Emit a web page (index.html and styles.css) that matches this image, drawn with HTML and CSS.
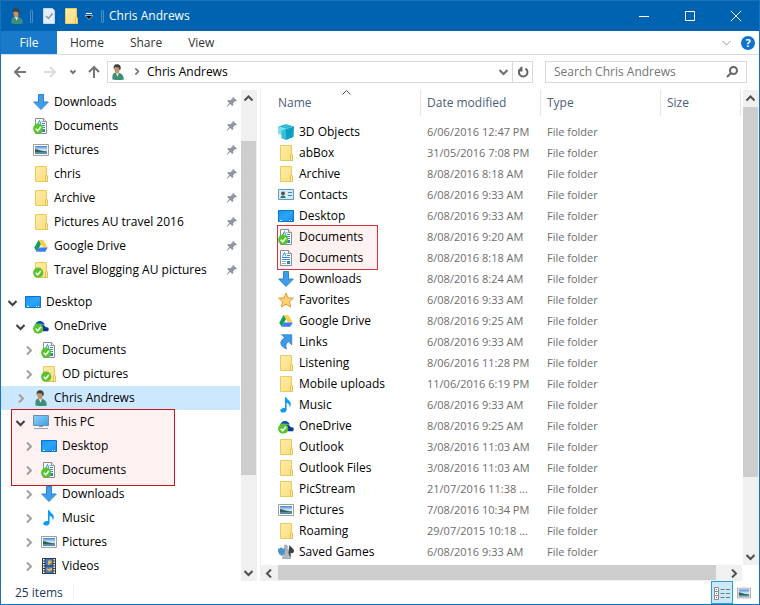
FILE: index.html
```
<!DOCTYPE html>
<html lang="en">
  <head>
    <meta charset="utf-8" />
    <title>Chris Andrews</title>
    <meta name="viewport" content="width=device-width, initial-scale=1.0" />
    <link rel="stylesheet" href="styles.css">
  </head>
  <body>
    <!-- Icon sprite -->
    <svg class="sprite" aria-hidden="true">
      <defs>
        <linearGradient id="folder-fill" x1="0" y1="0" x2="1" y2="1">
          <stop offset="0" stop-color="#ffedaa" />
          <stop offset="1" stop-color="#fbdc7c" />
        </linearGradient>
        <linearGradient id="sky" x1="0" y1="0" x2="0" y2="1">
          <stop offset="0" stop-color="#3f86d8" />
          <stop offset=".5" stop-color="#d5ebfa" />
          <stop offset="1" stop-color="#7fb3dc" />
        </linearGradient>
        <linearGradient id="screen" x1="0" y1="0" x2="1" y2="1">
          <stop offset="0" stop-color="#1a94ee" />
          <stop offset=".5" stop-color="#2aa5f8" />
          <stop offset="1" stop-color="#148fea" />
        </linearGradient>
        <linearGradient id="pc-screen" x1="0" y1="0" x2="1" y2="1">
          <stop offset="0" stop-color="#8fd0fa" />
          <stop offset="1" stop-color="#3d9fe6" />
        </linearGradient>
      </defs>
      <symbol id="badge" viewBox="0 0 16 16">
        <circle cx="5.2" cy="10.7" r="5.1" fill="#56c52c" />
        <path d="M2.7 10.8l2 2 3.3-4" fill="none" stroke="#fff" stroke-width="1.5" />
      </symbol>
      <symbol id="folder" viewBox="0 0 16 16">
        <path d="M2.5.5h11v9l1 1v5h-12z" fill="url(#folder-fill)" stroke="#ecc95f" />
        <path d="M12.5 15.5V10l1-1 1 1v5.5z" fill="#fff0b4" stroke="#e6bf4c" />
      </symbol>
      <symbol id="folder-sync" viewBox="0 0 16 16">
        <use href="#folder" /><use href="#badge" />
      </symbol>
      <symbol id="document" viewBox="0 0 16 16">
        <path d="M2.5.5h8l3 3v12h-11z" fill="#fdfdfd" stroke="#8d8d8d" />
        <path d="M10.5.5v3h3" fill="#eee" stroke="#8d8d8d" />
        <path d="M4.500 6.500l2-4 1.500 4M8.500 3.500h1M9 5.500h3M4 7.500h8M4 9.500h8" fill="none" stroke="#3a8cd4" />
        <path d="M4 11.500h4M4 13.500h4" stroke="#9aa7b2" />
        <path d="M9 11h3v3H9z" fill="#2f7fc4" />
      </symbol>
      <symbol id="document-sync" viewBox="0 0 16 16">
        <use href="#document" /><use href="#badge" />
      </symbol>
      <symbol id="picture" viewBox="0 0 16 16">
        <path d="M.5 2.5h15v11H.5z" fill="#fff" stroke="#a0a0a0" />
        <path d="M2 4h12v8H2z" fill="url(#sky)" />
        <path d="M2 7c3 .4 5 2 12 2.6v.9H2z" fill="#2f5f55" />
        <path d="M2 10.5h12V12H2z" fill="#5288a8" />
      </symbol>
      <symbol id="download" viewBox="0 0 16 16">
        <path d="M5.5.5h5V8h4.800L8 15.500.7 8h4.800z" fill="#3f9eec" stroke="#2f83cd" />
      </symbol>
      <symbol id="gdrive" viewBox="0 0 16 16">
        <path d="M5.600 2h4.800l4.300 7.600H9.900z" fill="#ffcf48" />
        <path d="M5.600 2L1.200 9.700l2.400 4.100L8 6.200z" fill="#11a15f" />
        <path d="M3.600 13.800L6 9.600h8.700l-2.400 4.200z" fill="#3f7df0" />
      </symbol>
      <symbol id="desktop" viewBox="0 0 16 16">
        <path d="M.5 2.5h15v11H.5z" fill="url(#screen)" stroke="#0b74c4" />
        <path d="M2 12.500h2M11 12.500h1M13 12.500h1" stroke="#d8efff" />
      </symbol>
      <symbol id="onedrive" viewBox="0 0 16 16">
        <path d="M2 9.500C1.600 5.500 4 3 7 3c2.400 0 4 1.300 4.600 3.400L9 8z" fill="#0b4fae" />
        <path d="M4 13.500c-1-4 1.200-7 4.300-7.200 2.200 0 3.600 1 4.200 2.500 2.200-.2 3.500 1 3.500 2.400 0 1.400-1 2.300-2.200 2.300z" fill="#07389a" stroke="#fff" stroke-width=".5" />
        <use href="#badge" />
      </symbol>
      <symbol id="user" viewBox="0 0 16 16">
        <path d="M2.500 15.500c-.5-4 .3-6.500 2.800-7l3.700.2c3 .7 5 3.200 4.800 6.800-2 .8-8 .8-11.300 0z" fill="#3f8f74" />
        <path d="M5.500 8.500H9l-1.300 4.300z" fill="#e9f3f5" />
        <path d="M4.300 3.500h5.200c.4 3-.5 6-2.200 6S4 6.500 4.300 3.500z" fill="#c98f63" />
        <path d="M3.900 5C3 2 4.500.3 7 .3s4.500 1.500 3.500 5.200L9.300 6 9 3.800 5 3.300z" fill="#41403f" />
      </symbol>
      <symbol id="pc" viewBox="0 0 16 16">
        <path d="M.5 1.5h15v10H.5z" fill="url(#pc-screen)" stroke="#6d8ea8" />
        <path d="M6 12.500h4" stroke="#8b9aa6" />
        <path d="M1 14.500h14" stroke="#9aa5ae" />
      </symbol>
      <symbol id="music" viewBox="0 0 16 16">
        <path d="M7 .3h1.500c.3 2.800 4.800 3.500 4.300 7.500-.2 1.300-.7 2-1.200 2.700.5-3-1.300-4.300-3-4.800v7c0 1.700-1.600 2.900-3.500 2.900-1.600 0-2.800-.8-2.800-2.100 0-1.700 2.300-3 4.700-2.500z" fill="#0d9cf5" />
      </symbol>
      <symbol id="video" viewBox="0 0 16 16">
        <path d="M1 0h14v16H1z" fill="#3a3a3a" />
        <path d="M4.500 1h7v6.500h-7zM4.500 8.500h7V15h-7z" fill="#3b78d8" />
        <path d="M7 2.500h3.500v3h-2V7H7zM5 10l3 1 3-1.500V12l-2 1H7z" fill="#e8bd2c" />
        <path d="M2.750 1v14M13.250 1v14" stroke="#fff" stroke-width="1.5" stroke-dasharray="1.5 1" />
      </symbol>
      <symbol id="cube" viewBox="0 0 16 16">
        <path d="M0 2.500L8 0l8 2.500L8 5z" fill="#36b9d0" />
        <path d="M0 2.500L8 5v11l-4.500-2v-3L0 10z" fill="#7fe0ee" />
        <path d="M3.500 6.500L8 5v11l-4.500-2z" fill="#35c0da" />
        <path d="M16 2.500L8 5v11l7.500-3z" fill="#0d9fc4" />
      </symbol>
      <symbol id="contacts" viewBox="0 0 16 16">
        <path d="M.5 2.5h15v10H.5z" fill="#d3ebf9" stroke="#5b9cc4" />
        <path d="M2.500 11c0-2 1-2.600 2.500-2.600S7.500 9 7.500 11z" fill="#2f7d63" />
        <circle cx="5" cy="6.3" r="1.9" fill="#5a4a40" />
        <path d="M10 5.500h4M10 8.500h4" stroke="#4a86b0" />
      </symbol>
      <symbol id="star" viewBox="0 0 16 16">
        <path d="M8 .8l2.100 5 5.300.4-4 3.600 1.300 5.300L8 12.200l-4.700 2.900 1.300-5.300-4-3.600 5.300-.4z" fill="#ffd070" stroke="#e29a45" />
      </symbol>
      <symbol id="link" viewBox="0 0 16 16">
        <path d="M3.500.7h10.300v10.200l-3.400-3.300c-2.300 1.500-3 4-2 7.300C4.600 13.700 2 10.500 3 7.800c.5-1.700 2-3 3.700-4z" fill="#3d98e6" stroke="#2c7dc6" stroke-width=".7" />
      </symbol>
      <symbol id="games" viewBox="0 0 16 16">
        <path d="M0 4.500h2c0-1.500 2.500-1.500 2.500 0H7v6H5c0 1.800-2.500 1.800-2.500 0H1v-2H0z" fill="#4c93c8" />
        <path d="M11.500 1c1 2 4.500 3.500 4.500 6 0 2-2 2.500-3.500 2 0 2 .5 3 1 3.500h-4z" fill="#3f4245" />
        <path d="M7.500 1c2 0 2.500 2 1.500 3.500 1.500 2.500 1 5.500 3 8l.5 2h-8l.5-2c2-2 1.500-5 2-8C6 3 6 1 7.500 1z" fill="#aeb9c1" stroke="#7f8b94" stroke-width=".6" />
      </symbol>
      <symbol id="pin" viewBox="0 0 12 12">
        <path d="M7 1l4 3.500-.8.7-1-.1-2 2.100.1 2-1 .9-2.200-2.200L1 11l-.3-.4L3.300 7 1.200 5l1-.9 2.200.1L6.700 2.300 6.300 1.500z" fill="#8c98a1" />
      </symbol>
      <symbol id="arrow-right" viewBox="0 0 9 9">
        <path d="M3 .5l4 4-4 4" />
      </symbol>
      <symbol id="arrow-down" viewBox="0 0 9 9">
        <path d="M.5 3l4 4 4-4" />
      </symbol>
      <symbol id="arrow-up" viewBox="0 0 9 9">
        <path d="M.5 6.500l4-4 4 4" />
      </symbol>
      <symbol id="arrow-left" viewBox="0 0 9 9">
        <path d="M6 .5l-4 4 4 4" />
      </symbol>
    </svg>

    <div class="window">
      <header class="title-bar">
        <svg class="icon"><use href="#user" /></svg>
        <span class="separator"></span>
        <button class="quick-button" aria-label="Properties">
          <svg class="icon" viewBox="0 0 16 16">
            <path d="M2.5.5h9l2 2v13h-11z" fill="#e4eefa" stroke="#c3d5ec" />
            <path d="M5 8l2.500 2.500 4-5" fill="none" stroke="#8b98a8" stroke-width="1.5" />
          </svg>
        </button>
        <button class="quick-button" aria-label="New folder">
          <svg class="icon"><use href="#folder" /></svg>
        </button>
        <button class="quick-menu" aria-label="Customize Quick Access Toolbar">
          <svg viewBox="0 0 8 8"><path d="M1 1.500h6" stroke="#fff" /><path d="M0 3.500h8l-4 4z" fill="#000" stroke="#fff" stroke-width=".6" /></svg>
        </button>
        <span class="separator"></span>
        <h1>Chris Andrews</h1>
        <div class="window-buttons">
          <button aria-label="Minimize">
            <svg viewBox="0 0 12 12"><path d="M1 6.500h10" /></svg>
          </button>
          <button aria-label="Maximize">
            <svg viewBox="0 0 12 12"><path d="M1.500 1.500h9v9h-9z" /></svg>
          </button>
          <button aria-label="Close">
            <svg viewBox="0 0 12 12"><path d="M1 1l10 10M11 1L1 11" /></svg>
          </button>
        </div>
      </header>

      <nav class="ribbon">
        <button class="tab file">File</button>
        <button class="tab">Home</button>
        <button class="tab">Share</button>
        <button class="tab">View</button>
        <button class="expand" aria-label="Expand the Ribbon">
          <svg class="arrow"><use href="#arrow-down" /></svg>
        </button>
        <button class="help" aria-label="Help">?</button>
      </nav>

      <div class="nav-bar">
        <button class="nav-button" aria-label="Back">
          <svg viewBox="0 0 14 14"><path d="M13 7H2M7 2L2 7l5 5" /></svg>
        </button>
        <button class="nav-button disabled" aria-label="Forward" disabled>
          <svg viewBox="0 0 14 14"><path d="M1 7h11M7 2l5 5-5 5" /></svg>
        </button>
        <button class="nav-button recent" aria-label="Recent locations">
          <svg viewBox="0 0 8 8"><path d="M1.500 2.500L4 5l2.500-2.500" /></svg>
        </button>
        <button class="nav-button up" aria-label="Up">
          <svg viewBox="0 0 14 14"><path d="M7 13V2M2 7l5-5 5 5" /></svg>
        </button>
        <div class="address">
          <svg class="icon"><use href="#user" /></svg>
          <svg class="arrow small"><use href="#arrow-right" /></svg>
          <a class="crumb" href="#">Chris Andrews</a>
          <button class="history" aria-label="Previous locations">
            <svg class="arrow"><use href="#arrow-down" /></svg>
          </button>
          <button class="refresh" aria-label="Refresh">
            <svg viewBox="0 0 12 12"><path d="M8.500 2.600A4.300 4.300 0 1 1 4 2.500M4.500.8v3.700H1" /></svg>
          </button>
        </div>
        <div class="search">
          <input type="text" aria-label="Search Chris Andrews" placeholder="Search Chris Andrews" />
          <svg viewBox="0 0 12 12"><circle cx="7.5" cy="4.5" r="3.5" /><path d="M5 7l-4 4" /></svg>
        </div>
      </div>

      <main class="content">
        <aside class="sidebar">
          <ul class="tree quick">
            <li class="item"><svg class="icon"><use href="#download" /></svg><a href="#">Downloads</a><svg class="pin"><use href="#pin" /></svg></li>
            <li class="item"><svg class="icon"><use href="#document-sync" /></svg><a href="#">Documents</a><svg class="pin"><use href="#pin" /></svg></li>
            <li class="item"><svg class="icon"><use href="#picture" /></svg><a href="#">Pictures</a><svg class="pin"><use href="#pin" /></svg></li>
            <li class="item"><svg class="icon"><use href="#folder" /></svg><a href="#">chris</a><svg class="pin"><use href="#pin" /></svg></li>
            <li class="item"><svg class="icon"><use href="#folder" /></svg><a href="#">Archive</a><svg class="pin"><use href="#pin" /></svg></li>
            <li class="item"><svg class="icon"><use href="#folder" /></svg><a href="#">Pictures AU travel 2016</a><svg class="pin"><use href="#pin" /></svg></li>
            <li class="item"><svg class="icon"><use href="#gdrive" /></svg><a href="#">Google Drive</a><svg class="pin"><use href="#pin" /></svg></li>
            <li class="item"><svg class="icon"><use href="#folder-sync" /></svg><a href="#">Travel Blogging AU pictures</a><svg class="pin"><use href="#pin" /></svg></li>
          </ul>
          <ul class="tree">
            <li class="item"><button class="toggle open" aria-label="Collapse"><svg class="arrow"><use href="#arrow-down" /></svg></button><svg class="icon"><use href="#desktop" /></svg><a href="#">Desktop</a></li>
            <li class="item level-1"><button class="toggle open" aria-label="Collapse"><svg class="arrow"><use href="#arrow-down" /></svg></button><svg class="icon"><use href="#onedrive" /></svg><a href="#">OneDrive</a></li>
            <li class="item level-2"><button class="toggle" aria-label="Expand"><svg class="arrow"><use href="#arrow-right" /></svg></button><svg class="icon"><use href="#document-sync" /></svg><a href="#">Documents</a></li>
            <li class="item level-2"><button class="toggle" aria-label="Expand"><svg class="arrow"><use href="#arrow-right" /></svg></button><svg class="icon"><use href="#folder-sync" /></svg><a href="#">OD pictures</a></li>
            <li class="item level-1 selected"><button class="toggle" aria-label="Expand"><svg class="arrow"><use href="#arrow-right" /></svg></button><svg class="icon"><use href="#user" /></svg><a href="#">Chris Andrews</a></li>
          </ul>
          <ul class="tree marked">
            <li class="item level-1"><button class="toggle open" aria-label="Collapse"><svg class="arrow"><use href="#arrow-down" /></svg></button><svg class="icon"><use href="#pc" /></svg><a href="#">This PC</a></li>
            <li class="item level-2"><button class="toggle" aria-label="Expand"><svg class="arrow"><use href="#arrow-right" /></svg></button><svg class="icon"><use href="#desktop" /></svg><a href="#">Desktop</a></li>
            <li class="item level-2"><button class="toggle" aria-label="Expand"><svg class="arrow"><use href="#arrow-right" /></svg></button><svg class="icon"><use href="#document-sync" /></svg><a href="#">Documents</a></li>
          </ul>
          <ul class="tree">
            <li class="item level-2"><button class="toggle" aria-label="Expand"><svg class="arrow"><use href="#arrow-right" /></svg></button><svg class="icon"><use href="#download" /></svg><a href="#">Downloads</a></li>
            <li class="item level-2"><button class="toggle" aria-label="Expand"><svg class="arrow"><use href="#arrow-right" /></svg></button><svg class="icon"><use href="#music" /></svg><a href="#">Music</a></li>
            <li class="item level-2"><button class="toggle" aria-label="Expand"><svg class="arrow"><use href="#arrow-right" /></svg></button><svg class="icon"><use href="#picture" /></svg><a href="#">Pictures</a></li>
            <li class="item level-2"><button class="toggle" aria-label="Expand"><svg class="arrow"><use href="#arrow-right" /></svg></button><svg class="icon"><use href="#video" /></svg><a href="#">Videos</a></li>
          </ul>
        </aside>
        <div class="scrollbar sidebar-scroll">
          <button aria-label="Scroll up"><svg class="arrow"><use href="#arrow-up" /></svg></button>
          <div class="track"><div class="thumb"></div></div>
          <button aria-label="Scroll down"><svg class="arrow"><use href="#arrow-down" /></svg></button>
        </div>

        <section class="files">
          <div class="files-view">
            <div class="table-wrap">
              <table>
                <colgroup>
                  <col class="col-name" />
                  <col class="col-date" />
                  <col class="col-type" />
                  <col />
                </colgroup>
                <thead>
                  <tr>
                    <th class="sorted"><div>Name</div><svg class="arrow"><use href="#arrow-up" /></svg></th>
                    <th><div>Date modified</div></th>
                    <th><div>Type</div></th>
                    <th><div>Size</div></th>
                  </tr>
                </thead>
                <tbody>
                  <tr><td><svg class="icon"><use href="#cube" /></svg>3D Objects</td><td>6/06/2016 12:47 PM</td><td>File folder</td><td></td></tr>
                  <tr><td><svg class="icon"><use href="#folder" /></svg>abBox</td><td>31/05/2016 7:08 PM</td><td>File folder</td><td></td></tr>
                  <tr><td><svg class="icon"><use href="#folder" /></svg>Archive</td><td>8/08/2016 8:18 AM</td><td>File folder</td><td></td></tr>
                  <tr><td><svg class="icon"><use href="#contacts" /></svg>Contacts</td><td>6/08/2016 9:33 AM</td><td>File folder</td><td></td></tr>
                  <tr><td><svg class="icon"><use href="#desktop" /></svg>Desktop</td><td>6/08/2016 9:33 AM</td><td>File folder</td><td></td></tr>
                  <tr><td class="marked-cell"><svg class="icon"><use href="#document-sync" /></svg>Documents</td><td>8/08/2016 9:20 AM</td><td>File folder</td><td></td></tr>
                  <tr><td><svg class="icon"><use href="#document" /></svg>Documents</td><td>8/08/2016 8:18 AM</td><td>File folder</td><td></td></tr>
                  <tr><td><svg class="icon"><use href="#download" /></svg>Downloads</td><td>8/08/2016 8:24 AM</td><td>File folder</td><td></td></tr>
                  <tr><td><svg class="icon"><use href="#star" /></svg>Favorites</td><td>6/08/2016 9:33 AM</td><td>File folder</td><td></td></tr>
                  <tr><td><svg class="icon"><use href="#gdrive" /></svg>Google Drive</td><td>8/08/2016 9:25 AM</td><td>File folder</td><td></td></tr>
                  <tr><td><svg class="icon"><use href="#link" /></svg>Links</td><td>6/08/2016 9:33 AM</td><td>File folder</td><td></td></tr>
                  <tr><td><svg class="icon"><use href="#folder" /></svg>Listening</td><td>8/06/2016 11:28 PM</td><td>File folder</td><td></td></tr>
                  <tr><td><svg class="icon"><use href="#folder" /></svg>Mobile uploads</td><td>11/06/2016 6:19 PM</td><td>File folder</td><td></td></tr>
                  <tr><td><svg class="icon"><use href="#music" /></svg>Music</td><td>6/08/2016 9:33 AM</td><td>File folder</td><td></td></tr>
                  <tr><td><svg class="icon"><use href="#onedrive" /></svg>OneDrive</td><td>8/08/2016 9:25 AM</td><td>File folder</td><td></td></tr>
                  <tr><td><svg class="icon"><use href="#folder" /></svg>Outlook</td><td>3/08/2016 11:03 AM</td><td>File folder</td><td></td></tr>
                  <tr><td><svg class="icon"><use href="#folder" /></svg>Outlook Files</td><td>3/08/2016 11:03 AM</td><td>File folder</td><td></td></tr>
                  <tr><td><svg class="icon"><use href="#folder" /></svg>PicStream</td><td>21/07/2016 11:38 ...</td><td>File folder</td><td></td></tr>
                  <tr><td><svg class="icon"><use href="#picture" /></svg>Pictures</td><td>7/08/2016 10:34 PM</td><td>File folder</td><td></td></tr>
                  <tr><td><svg class="icon"><use href="#folder" /></svg>Roaming</td><td>29/07/2015 10:18 ...</td><td>File folder</td><td></td></tr>
                  <tr><td><svg class="icon"><use href="#games" /></svg>Saved Games</td><td>6/08/2016 9:33 AM</td><td>File folder</td><td></td></tr>
                </tbody>
              </table>
            </div>
            <div class="scrollbar files-scroll">
              <button aria-label="Scroll up"><svg class="arrow"><use href="#arrow-up" /></svg></button>
              <div class="track"><div class="thumb"></div></div>
              <button aria-label="Scroll down"><svg class="arrow"><use href="#arrow-down" /></svg></button>
            </div>
          </div>
          <div class="scrollbar horizontal">
            <button aria-label="Scroll left"><svg class="arrow"><use href="#arrow-left" /></svg></button>
            <div class="track"><div class="thumb"></div></div>
            <button aria-label="Scroll right"><svg class="arrow"><use href="#arrow-right" /></svg></button>
          </div>
        </section>
      </main>

      <footer class="status-bar">
        <span class="count">25 items</span>
        <div class="view-buttons">
          <button class="active" aria-label="Details view">
            <svg viewBox="0 0 16 14">
              <path d="M.5 1.500h4v4h-4zM.5 5.500h4v4h-4zM.5 9.500h4v4h-4z" fill="#fff" stroke="#8b8b8b" />
              <path d="M2 3.500h1M2 7.500h1" stroke="#3a78c8" />
              <path d="M2 11.500h1" stroke="#d03030" />
              <path d="M6.500 3.500h4M12 3.500h4M6.500 7.500h4M12 7.500h4M6.500 11.500h4M12 11.500h4" stroke="#6f7b82" />
            </svg>
          </button>
          <button aria-label="Large icons view">
            <svg viewBox="0 0 16 16"><use href="#picture" /></svg>
          </button>
        </div>
      </footer>
    </div>
  </body>
</html>
```
FILE: styles.css
```
*,
*::before {
  box-sizing: border-box;
}

body {
  font-family: "Open Sans", "Noto Sans", sans-serif;
  font-size: 12px;
  line-height: 16px;
  color: #000;
  margin: 0;
}

button {
  font: inherit;
  color: inherit;
  background: none;
  border: none;
  padding: 0;
  display: flex;
  align-items: center;
  justify-content: center;
  flex-shrink: 0;
}

a {
  color: inherit;
  text-decoration: none;
}

.sprite {
  position: absolute;
  width: 0;
  height: 0;
}

.icon {
  width: 16px;
  height: 16px;
  flex-shrink: 0;
}

.arrow {
  width: 9px;
  height: 9px;
  flex-shrink: 0;
  fill: none;
  stroke: #505050;
  stroke-width: 2;
}

.arrow.small {
  width: 7px;
  height: 7px;
  stroke: #707070;
}

.window {
  display: flex;
  flex-direction: column;
  min-height: 100vh;
  background-color: #fff;
  border: 1px solid #1a72bb;
  border-top: none;
}

/* Title bar */
.title-bar {
  display: flex;
  align-items: center;
  height: 31px;
  padding-left: 8px;
  background-color: #0063b1;
  border-top: 1px solid #1a72bb;
  color: #fff;
}

.title-bar h1 {
  font-size: 12px;
  font-weight: normal;
  margin: 0;
}

.separator {
  width: 3px;
  height: 13px;
  margin: 0 5px;
  border: 1px solid #4a8fc8;
  border-radius: 1px;
}

.quick-button {
  width: 22px;
}

.quick-menu {
  width: 14px;
}

.quick-menu svg {
  width: 8px;
  height: 8px;
}

.window-buttons {
  display: flex;
  margin-left: auto;
}

.window-buttons button {
  width: 46px;
  height: 30px;
}

.window-buttons svg {
  width: 12px;
  height: 12px;
  fill: none;
  stroke: #fff;
}

/* Ribbon tabs */
.ribbon {
  display: flex;
  align-items: center;
  height: 24px;
  padding-right: 4px;
  border-bottom: 1px solid #dadbdc;
  color: #333;
}

.tab {
  height: 23px;
  padding: 0 13px;
}

.tab.file {
  width: 56px;
  background-color: #1979ca;
  color: #fff;
}

.expand {
  margin-left: auto;
  margin-right: 10px;
}

.expand .arrow {
  stroke: #999;
  stroke-width: 1;
}

.help {
  width: 14px;
  height: 14px;
  border-radius: 50%;
  background-color: #0f72cc;
  color: #fff;
  font-size: 11px;
  font-weight: bold;
}

/* Address and search row */
.nav-bar {
  display: flex;
  align-items: center;
  height: 35px;
  padding: 0 12px 2px 4px;
}

.nav-button {
  width: 30px;
}

.nav-button svg {
  width: 14px;
  height: 14px;
  fill: none;
  stroke: #757575;
  stroke-width: 2;
}

.nav-button.disabled svg {
  stroke: #dcdcdc;
}

.nav-button.recent {
  width: 16px;
}

.nav-button.recent svg {
  width: 8px;
  height: 8px;
}

.nav-button.up {
  width: 26px;
}

.address {
  display: flex;
  align-items: center;
  flex: 1;
  height: 22px;
  border: 1px solid #d9d9d9;
  padding-left: 2px;
}

.address .small {
  margin: 0 7px;
}

.history {
  margin-left: auto;
  width: 18px;
}

.history .arrow {
  stroke: #707070;
}

.refresh {
  width: 20px;
  height: 20px;
  border-left: 1px solid #d9d9d9;
}

.refresh svg,
.search svg {
  width: 12px;
  height: 12px;
  fill: none;
  stroke: #666;
  stroke-width: 2;
}

.search {
  display: flex;
  align-items: center;
  width: 202px;
  height: 22px;
  margin-left: 12px;
  padding: 0 8px;
  border: 1px solid #d9d9d9;
}

.search input {
  flex: 1;
  min-width: 0;
  border: none;
  outline: none;
  padding: 0;
  font: inherit;
  background: none;
}

.search input::placeholder {
  color: #757575;
  opacity: 1;
}

/* Main area */
.content {
  display: flex;
  flex: 1;
}

.sidebar {
  width: 240px;
  flex-shrink: 0;
}

.tree {
  list-style: none;
  margin: 0;
  padding: 0;
}

.tree.quick {
  margin-bottom: 8px;
}

.item {
  display: flex;
  align-items: center;
  height: 24px;
  padding: 0 3px 0 7px;
}

.item a {
  margin-left: 5px;
}

.quick .item {
  padding-left: 32px;
}

.item.level-1 {
  padding-left: 15px;
}

.item.level-2 {
  padding-left: 23px;
}

.item.selected {
  background-color: #cce8ff;
  width: 239px;
}

.toggle {
  margin-right: 8px;
}

.toggle .arrow {
  stroke: #a0a0a0;
}

.toggle.open .arrow {
  stroke: #404040;
}

.pin {
  width: 12px;
  height: 12px;
  margin-left: auto;
}

.marked {
  position: relative;
  isolation: isolate;
}

.marked::before {
  content: "";
  position: absolute;
  z-index: -1;
  top: -1px;
  bottom: -4px;
  left: 10px;
  width: 164px;
  background-color: #fdf1f1;
  border: 1px solid #c4161c;
}

/* Scrollbars */
.scrollbar {
  display: flex;
  flex-direction: column;
  width: 16px;
  flex-shrink: 0;
  background-color: #f0f0f0;
}

.scrollbar button {
  width: 15px;
  height: 17px;
}

.scrollbar .track {
  flex: 1;
}

.scrollbar .thumb {
  background-color: #cdcdcd;
}

.sidebar-scroll .track {
  padding-top: 34px;
}

.sidebar-scroll .thumb {
  width: 15px;
  height: 79%;
}

.files-scroll .thumb {
  width: 15px;
  height: 84%;
}

.scrollbar.horizontal {
  flex-direction: row;
  width: auto;
  height: 16px;
  margin-right: 17px;
}

.horizontal button {
  width: 17px;
  height: 16px;
}

.horizontal .thumb {
  width: 98%;
  height: 15px;
}

/* File list */
.files {
  display: flex;
  flex-direction: column;
  flex: 1;
  min-width: 0;
  margin-left: 3px;
  border-left: 1px solid #f0f0f0;
}

.files-view {
  display: flex;
  flex: 1;
}

.table-wrap {
  flex: 1;
  min-width: 0;
  margin-right: 2px;
}

table {
  width: 100%;
  table-layout: fixed;
  border-collapse: collapse;
  isolation: isolate;
}

.col-name {
  width: 160px;
}

.col-date,
.col-type {
  width: 120px;
}

th {
  position: relative;
  height: 31px;
  padding: 0 0 5px;
  font-weight: normal;
  text-align: left;
  color: #4c607a;
}

th div {
  height: 26px;
  padding: 5px 0 0 6px;
  border-right: 1px solid #e5e5e5;
}

th:first-child div {
  padding-left: 17px;
}

th.sorted .arrow {
  position: absolute;
  top: -2px;
  left: 81px;
  stroke-width: 1;
}

td {
  height: 21px;
  padding: 0 0 0 6px;
  font-size: 11px;
  color: #6d6d6d;
  white-space: nowrap;
}

td:first-child {
  padding-left: 17px;
  font-size: 12px;
  color: #000;
}

td .icon {
  margin-right: 5px;
  vertical-align: top;
}

.marked-cell {
  position: relative;
}

.marked-cell::before {
  content: "";
  position: absolute;
  z-index: -1;
  top: -1px;
  left: 16px;
  width: 101px;
  height: 45px;
  background-color: #fdf1f1;
  border: 1px solid #d03438;
}

/* Status bar */
.status-bar {
  display: flex;
  align-items: center;
  height: 23px;
  padding-left: 14px;
  color: #1e395b;
}

.count {
  padding-right: 10px;
  border-right: 1px solid #f0f0f0;
}

.view-buttons {
  display: flex;
  margin-left: auto;
  padding-right: 4px;
}

.view-buttons button {
  width: 22px;
  height: 23px;
}

.view-buttons .active {
  background-color: #cce8f4;
  border: 1px solid #26a0da;
}

.view-buttons svg {
  width: 16px;
  height: 14px;
}
```
